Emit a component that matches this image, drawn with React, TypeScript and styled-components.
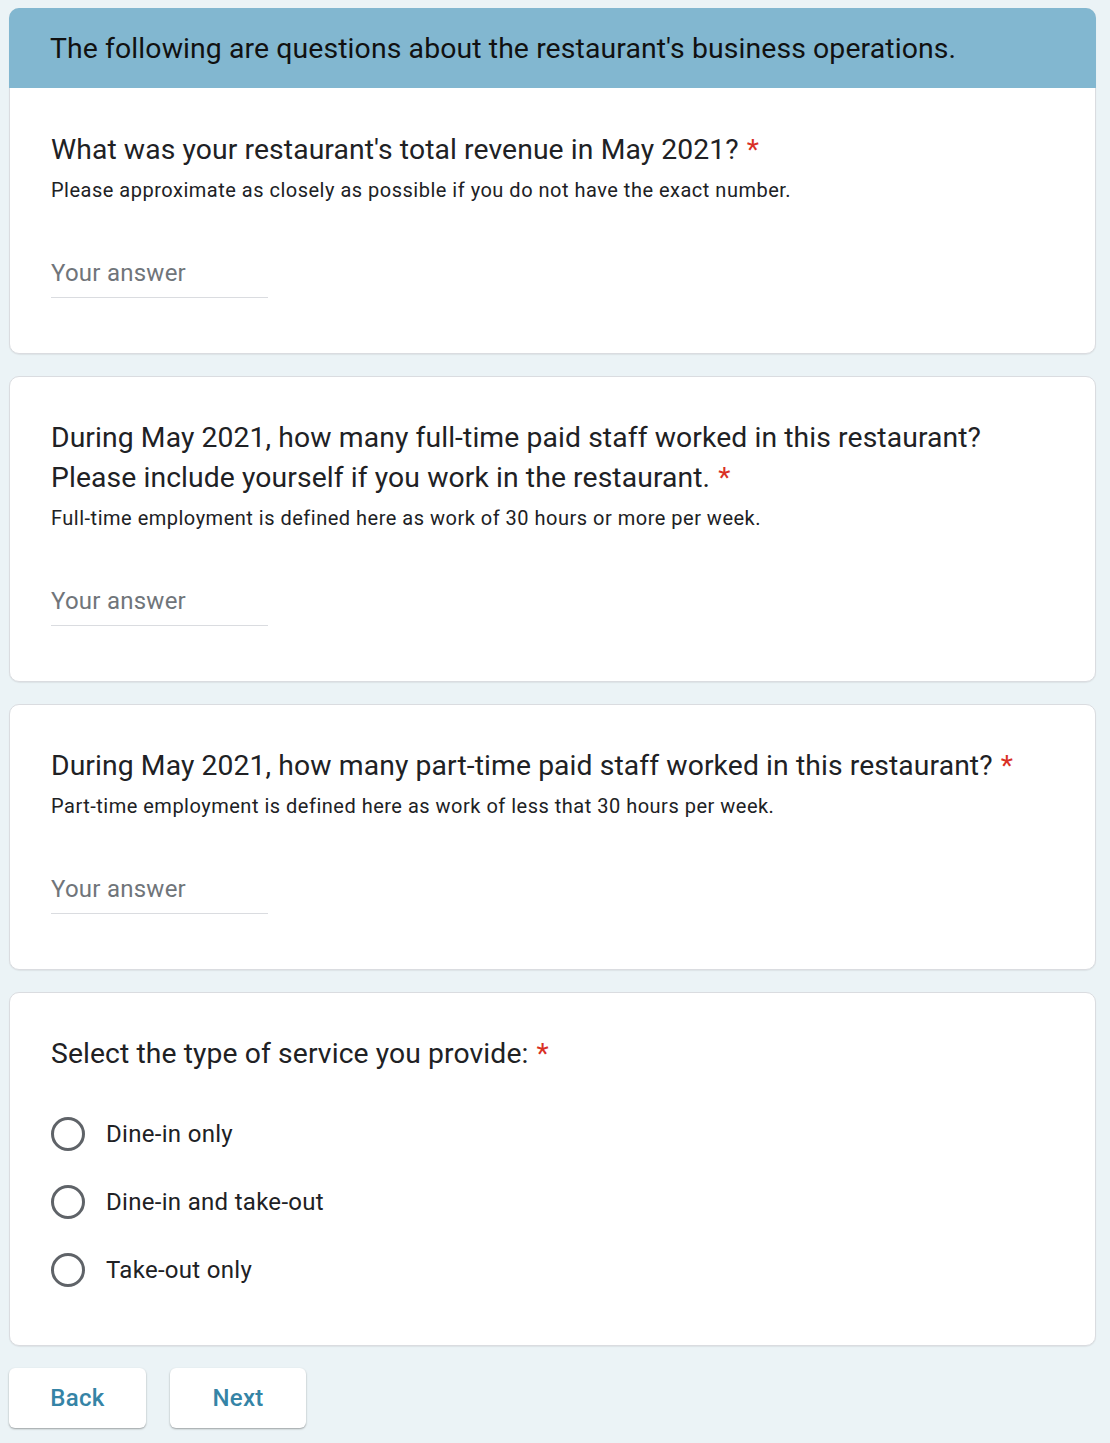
import React from "react";
import styled, { createGlobalStyle } from "styled-components";

const GlobalStyle = createGlobalStyle`
  html, body {
    margin: 0;
    padding: 0;
    background: #ebf3f6;
  }
  body {
    font-family: Roboto, "Liberation Sans", Arial, sans-serif;
    color: #202124;
  }
`;

const Page = styled.div`
  width: 1087px;
  padding: 8px 0 15px 9px;
  display: flex;
  flex-direction: column;
  gap: 22px;
`;

const Card = styled.section`
  background: #fff;
  border: 1px solid #dadce0;
  border-radius: 10px;
  box-shadow: 0 1px 1px rgba(60, 64, 67, 0.08);
`;

const Header = styled.header`
  background: #82b7d0;
  height: 80px;
  margin: -1px -1px 0;
  padding: 0 0 0 41px;
  border-radius: 10px 10px 0 0;
  display: flex;
  align-items: center;
  font-family: Roboto, "Liberation Sans", sans-serif;
  font-size: 28.4px;
  color: #111;
  letter-spacing: 0.1px;
  box-sizing: border-box;
`;

const Body = styled.div<{ $first?: boolean }>`
  padding: ${(p) => (p.$first ? "42px" : "41px")} 42px 55px 41px;
`;

const ChoiceBody = styled.div`
  padding: 41px 42px 41px 41px;
`;

const Title = styled.h2`
  margin: 0;
  font-family: Roboto, "Liberation Sans", sans-serif;
  font-weight: 400;
  font-size: 28.3px;
  line-height: 40px;
  color: #202124;
  letter-spacing: 0.1px;
`;

const Star = styled.span`
  color: #d93025;
  margin-left: 8px;
`;

const Desc = styled.p`
  margin: 6px 0 0;
  font-size: 20px;
  line-height: 28px;
  letter-spacing: 0.5px;
  color: #202124;
`;

const AnswerField = styled.div`
  margin-top: 53px;
  width: 217px;
  padding-bottom: 8px;
  border-bottom: 1px solid #dadce0;
`;

const Placeholder = styled.span`
  display: block;
  font-size: 24px;
  line-height: 32px;
  color: #70757a;
  letter-spacing: 0.25px;
`;

const Options = styled.div`
  margin-top: 26px;
  display: flex;
  flex-direction: column;
`;

const OptionRow = styled.label`
  height: 68px;
  display: flex;
  align-items: center;
  gap: 21px;
`;

const Radio = styled.span`
  width: 34px;
  height: 34px;
  box-sizing: border-box;
  border: 3px solid #5f6368;
  border-radius: 50%;
  flex: none;
`;

const OptionText = styled.span`
  font-size: 24px;
  letter-spacing: 0.3px;
  color: #202124;
`;

const Buttons = styled.div`
  display: flex;
  gap: 24px;
`;

const NavButton = styled.button<{ $w: number }>`
  width: ${(p) => p.$w}px;
  height: 60px;
  border: none;
  border-radius: 6px;
  background: #fff;
  box-shadow: 0 1px 2px rgba(0, 0, 0, 0.35);
  font-family: Roboto, "Liberation Sans", sans-serif;
  font-size: 24px;
  font-weight: 500;
  color: #3584a6;
  letter-spacing: 0.3px;
  cursor: pointer;
`;

const TextQuestion = ({
  title,
  desc,
  first,
}: {
  title: React.ReactNode;
  desc: string;
  first?: boolean;
}) => (
  <Body $first={first}>
    <Title>
      {title}
      <Star>*</Star>
    </Title>
    <Desc>{desc}</Desc>
    <AnswerField>
      <Placeholder>Your answer</Placeholder>
    </AnswerField>
  </Body>
);

export default function App() {
  return (
    <>
      <GlobalStyle />
      <Page>
        <Card>
          <Header>The following are questions about the restaurant's business operations.</Header>
          <TextQuestion
            first
            title="What was your restaurant's total revenue in May 2021?"
            desc="Please approximate as closely as possible if you do not have the exact number."
          />
        </Card>
        <Card>
          <TextQuestion
            title={
              <>
                During May 2021, how many full-time paid staff worked in this restaurant?
                <br />
                Please include yourself if you work in the restaurant.
              </>
            }
            desc="Full-time employment is defined here as work of 30 hours or more per week."
          />
        </Card>
        <Card>
          <TextQuestion
            title="During May 2021, how many part-time paid staff worked in this restaurant?"
            desc="Part-time employment is defined here as work of less that 30 hours per week."
          />
        </Card>
        <Card>
          <ChoiceBody>
            <Title>
              Select the type of service you provide:
              <Star>*</Star>
            </Title>
            <Options>
              {["Dine-in only", "Dine-in and take-out", "Take-out only"].map((o) => (
                <OptionRow key={o}>
                  <Radio />
                  <OptionText>{o}</OptionText>
                </OptionRow>
              ))}
            </Options>
          </ChoiceBody>
        </Card>
        <Buttons>
          <NavButton $w={137}>Back</NavButton>
          <NavButton $w={136}>Next</NavButton>
        </Buttons>
      </Page>
    </>
  );
}
